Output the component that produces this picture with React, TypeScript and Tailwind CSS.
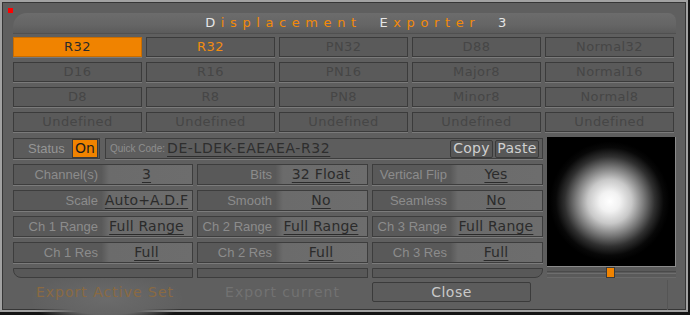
import React from 'react';

const presets = [
  ['R32', 'R32', 'PN32', 'D88', 'Normal32'],
  ['D16', 'R16', 'PN16', 'Major8', 'Normal16'],
  ['D8', 'R8', 'PN8', 'Minor8', 'Normal8'],
  ['Undefined', 'Undefined', 'Undefined', 'Undefined', 'Undefined'],
];

const params = [
  [
    ['Channel(s)', '3'],
    ['Bits', '32 Float'],
    ['Vertical Flip', 'Yes'],
  ],
  [
    ['Scale', 'Auto+A.D.F'],
    ['Smooth', 'No'],
    ['Seamless', 'No'],
  ],
  [
    ['Ch 1 Range', 'Full Range'],
    ['Ch 2 Range', 'Full Range'],
    ['Ch 3 Range', 'Full Range'],
  ],
  [
    ['Ch 1 Res', 'Full'],
    ['Ch 2 Res', 'Full'],
    ['Ch 3 Res', 'Full'],
  ],
];

const verdana = { fontFamily: '"DejaVu Sans", Verdana, sans-serif' };
const arial = { fontFamily: '"Liberation Sans", Arial, sans-serif' };

const PresetButton = ({ label, row, col }: { label: string; row: number; col: number }) => {
  const active = row === 0 && col === 0;
  const highlighted = row === 0 && col === 1;
  return (
    <div
      className={`h-[20px] flex items-center justify-center border text-[13px] tracking-[0.4px] shadow-[0_1px_0_#7a7a7a] ${
        active
          ? 'bg-[#f08300] border-[#c76c00] text-[#2a2a2a]'
          : 'bg-[#5a5a5a] border-[#3b3b3b] ' + (highlighted ? 'text-[#f28c10]' : 'text-[#464646]')
      }`}
      style={verdana}
    >
      {label}
    </div>
  );
};

const ParamCell = ({ label, value, wide }: { label: string; value: string; wide: boolean }) => (
  <div className="h-[21px] flex border border-[#3d3d3d] shadow-[0_1px_0_#7b7b7b] bg-[#595959]">
    <div
      className={`${wide ? 'w-[87px]' : 'w-[77px]'} shrink-0 flex items-center justify-end pr-[3px] text-[13px] text-[#8c8c8c]`}
      style={arial}
    >
      {label}
    </div>
    <div className="flex-1 flex items-center justify-center bg-[linear-gradient(90deg,#585858_0px,#6b6b6b_8px,#6d6d6d_100%)]">
      <span className="text-[14px] tracking-[0.2px] text-[#2b2b2b] underline underline-offset-[3px] decoration-[1px]" style={verdana}>
        {value}
      </span>
    </div>
  </div>
);

export default function App() {
  return (
    <div className="w-[690px] h-[315px] bg-[#151515] overflow-hidden">
      <div className="relative w-[688px] h-[312px] border-2 border-[#a2a2a2] bg-[#5f5f5f] shadow-[inset_0_0_0_1px_#363636] pl-[11px] pr-[10px] pt-[11px]">
        {/* red corner marker */}
        <div className="absolute left-[6px] top-[6px] w-[5px] h-[5px] bg-[#ff0000]" />
        {/* faded background figure */}
        <div className="absolute left-[30px] top-[272px] w-[150px] h-[50px] rounded-full bg-[radial-gradient(ellipse_at_center,#6b6b6b_0%,#646464_45%,rgba(95,95,95,0)_75%)]" />
        <div className="absolute right-[18px] top-[278px] w-px h-[30px] bg-[#555555]" />

        <div className="relative">
          {/* title */}
          <div className="h-[20px] w-[663px] rounded-tl-[14px] rounded-tr-[8px] bg-[linear-gradient(180deg,#6c6c6c_0%,#656565_60%,#5b5b5b_100%)] shadow-[0_1px_0_#505050] flex items-center justify-center pl-[28px]">
            <span className="text-[13px] tracking-[5.6px] [word-spacing:8px]" style={verdana}>
              <span className="text-[#e6e6e6]">D</span>
              <span className="text-[#f28a0a]">isplacement</span>{' '}
              <span className="text-[#e6e6e6]">E</span>
              <span className="text-[#f28a0a]">xporter</span>{' '}
              <span className="text-[#e6e6e6]">3</span>
            </span>
          </div>

          {/* presets */}
          <div className="mt-[4px] grid grid-cols-[129px_129px_129px_129px_129px] gap-x-[4px] gap-y-[5px]">
            {presets.map((row, r) =>
              row.map((label, c) => <PresetButton key={`${r}-${c}`} label={label} row={r} col={c} />)
            )}
          </div>

          <div className="mt-[6px] flex gap-[4px]">
            <div className="w-[530px]">
              {/* status + quick code */}
              <div className="h-[21px] flex gap-[5px]">
                <div className="w-[87px] flex items-center border border-[#3d3d3d] shadow-[0_1px_0_#7b7b7b] bg-[#5b5b5b] pl-[14px] pr-[1px]">
                  <span className="text-[13px] text-[#959595] flex-1" style={arial}>Status</span>
                  <div className="w-[26px] h-[19px] bg-[#f08300] border border-[#3a3a3a] flex items-center justify-center text-[14px] text-[#1c1c1c]" style={verdana}>
                    On
                  </div>
                </div>
                <div className="flex-1 flex items-center border border-[#3d3d3d] shadow-[0_1px_0_#7b7b7b] bg-[#5d5d5d] pl-[4px] pr-[3px]">
                  <span className="text-[10px] text-[#8e8e8e] mr-[2px]" style={arial}>Quick Code:</span>
                  <span className="text-[14px] tracking-[0.6px] text-[#2e2e2e] underline underline-offset-[3px] decoration-[1px]" style={verdana}>
                    DE-LDEK-EAEAEA-R32
                  </span>
                  <div className="flex-1" />
                  <div className="w-[43px] h-[18px] border border-[#3a3a3a] rounded-[2px] bg-[#575757] flex items-center justify-center text-[14px] tracking-[0.3px] text-[#d0d0d0]" style={verdana}>
                    Copy
                  </div>
                  <div className="ml-[2px] w-[44px] h-[18px] border border-[#3a3a3a] rounded-[2px] bg-[#575757] flex items-center justify-center text-[14px] tracking-[0.3px] text-[#d0d0d0]" style={verdana}>
                    Paste
                  </div>
                </div>
              </div>

              {/* parameters */}
              <div className="mt-[5px] grid grid-cols-[180px_171px_171px] gap-x-[4px] gap-y-[5px]">
                {params.map((row, r) =>
                  row.map(([label, value], c) => (
                    <ParamCell key={`${r}-${c}`} label={label} value={value} wide={c === 0} />
                  ))
                )}
              </div>

              {/* bottom strip */}
              <div className="mt-[5px] h-[10px] grid grid-cols-[180px_171px_171px] gap-x-[4px]">
                <div className="border border-[#3d3d3d] bg-[#585858] rounded-bl-[8px]" />
                <div className="border border-[#3d3d3d] bg-[#585858]" />
                <div className="border border-[#3d3d3d] bg-[#585858] rounded-br-[8px]" />
              </div>
            </div>

            {/* preview */}
            <div className="w-[129px] -mt-[1px]">
              <div className="h-[130px] bg-black border-r border-b border-[#8a8a8a] bg-[radial-gradient(circle_at_49%_50%,#ffffff_0px,#f2f2f2_10px,#c8c8c8_22px,#7a7a7a_34px,#303030_45px,#080808_54px,#000000_60px)]" />
              <div className="relative h-[11px] bg-[#5a5a5a] border-b border-[#6a6a6a]">
                <div className="absolute left-0 right-0 top-[4px] h-px bg-[#4a4a4a]" />
                <div className="absolute left-0 right-0 top-[6px] h-px bg-[#6e6e6e]" />
                <div className="absolute left-[59px] top-0 w-[9px] h-[11px] bg-[#f08300] border border-[#3a3a3a]" />
              </div>
            </div>
          </div>

          {/* action buttons */}
          <div className="mt-[4px] h-[20px] flex">
            <div className="w-[180px] flex items-center justify-center pl-[4px] text-[14px] tracking-[1px] text-[#8a6a42]" style={verdana}>
              Export Active Set
            </div>
            <div className="ml-[4px] w-[171px] flex items-center justify-center text-[14px] tracking-[1px] text-[#727272]" style={verdana}>
              Export current
            </div>
            <div className="ml-[4px] w-[159px] border border-[#3b3b3b] rounded-[2px] bg-[#5c5c5c] flex items-center justify-center text-[14px] tracking-[0.5px] text-[#c9c9c9]" style={verdana}>
              Close
            </div>
          </div>
        </div>
      </div>
    </div>
  );
}
